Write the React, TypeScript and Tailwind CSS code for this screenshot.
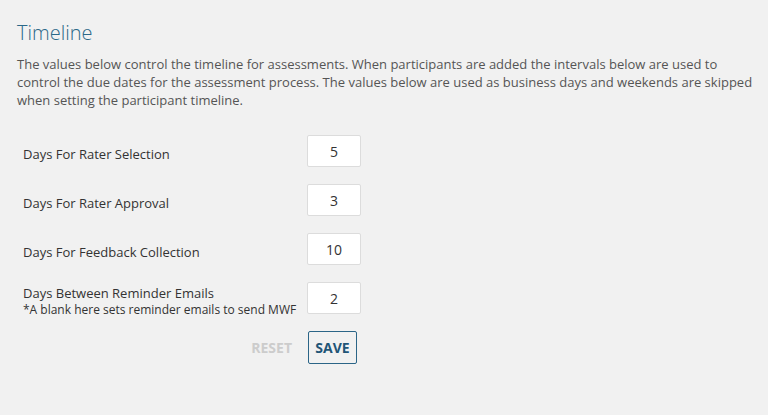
import React from 'react';

interface TimelineField {
  label: string;
  note?: string;
  value: string;
}

const fields: TimelineField[] = [
  { label: 'Days For Rater Selection', value: '5' },
  { label: 'Days For Rater Approval', value: '3' },
  { label: 'Days For Feedback Collection', value: '10' },
  {
    label: 'Days Between Reminder Emails',
    note: '*A blank here sets reminder emails to send MWF',
    value: '2',
  },
];

export default function App() {
  return (
    <div className="min-h-[415px] bg-[#f1f1f1] pl-[17px] pr-[8px] pt-[19px] font-['Open_Sans',sans-serif]">
      <h2 className="text-[20px] font-light leading-[28px] text-[#2b6888]">Timeline</h2>
      <p className="mt-[8px] text-[13px] leading-[18px] text-[#555]">
        The values below control the timeline for assessments. When participants are added the intervals below are used to
        control the due dates for the assessment process. The values below are used as business days and weekends are skipped
        when setting the participant timeline.
      </p>

      <div className="mt-[26px] flex flex-col gap-[17px] pl-[6px]">
        {fields.map((field) => (
          <div key={field.label} className="flex h-[32px] items-center">
            {/* label sits a little below the input's centre */}
            <div className="w-[284px] pt-[6px]">
              <div className="text-[13px] leading-[17px] text-[#333]">{field.label}</div>
              {field.note && <div className="text-[12px] leading-[16px] text-[#333]">{field.note}</div>}
            </div>
            <input
              type="text"
              defaultValue={field.value}
              className="h-[32px] w-[54px] rounded-[2px] border border-[#dcdcdc] bg-white text-center text-[14px] text-[#333] outline-none"
            />
          </div>
        ))}

        <div className="flex items-center">
          <div className="flex w-[285px] justify-end pr-[16px]">
            <button className="text-[14px] font-bold text-[#cccccc]">RESET</button>
          </div>
          <button className="h-[33px] w-[49px] rounded-[2px] border border-[#2b6587] text-[14px] font-bold text-[#1f5577]">
            SAVE
          </button>
        </div>
      </div>
    </div>
  );
}
